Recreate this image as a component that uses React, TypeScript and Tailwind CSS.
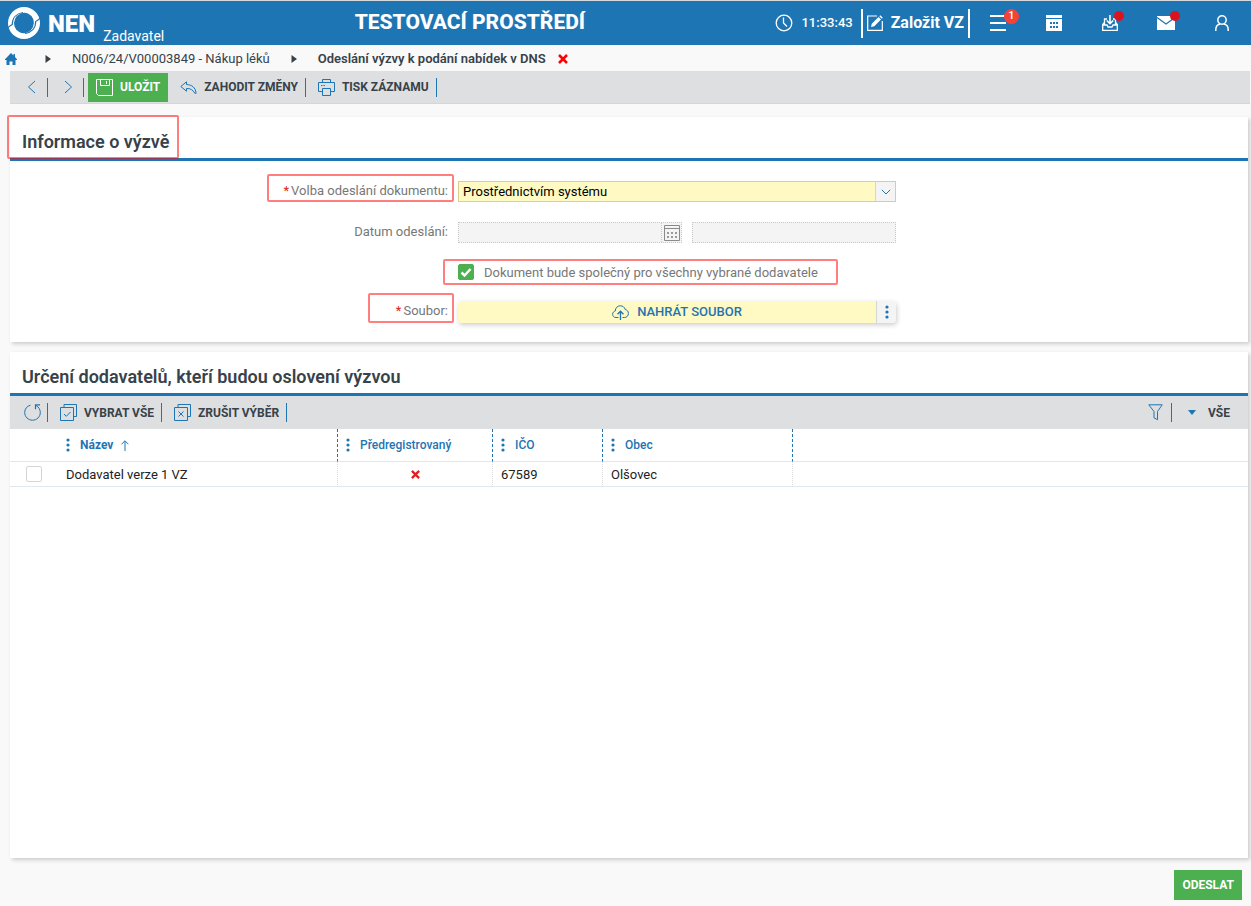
import React from "react";

interface IconProps {
  className?: string;
}

interface ChildrenProps {
  children: React.ReactNode;
}

const Logo = () => (
  <svg viewBox="0 0 32 32" className="h-8 w-8">
    <circle cx="16" cy="16" r="16" className="fill-white" />
    <ellipse cx="16" cy="16" rx="9.800" ry="10.300" className="fill-[#1e75b3]" transform="rotate(25 16 16)" />
    <path
      d="M-.5 21.500C1.500 18.500 3 18.500 4.300 17.500 4.300 11 8.500 6.500 15 5.500M32.500 10.500C30.500 13.500 29 13.500 27.700 14.500 27.700 21 23.500 25.500 17 26.500"
      className="fill-none stroke-[#1e75b3]"
      strokeWidth="1.200"
    />
  </svg>
);

const ClockIcon = () => (
  <svg viewBox="0 0 18 18" className="h-[18px] w-[18px] fill-none stroke-white">
    <circle cx="9" cy="9" r="7.800" strokeWidth="1.300" />
    <path d="M8.500 3.500V9l3.500 3.500" strokeWidth="1.300" />
  </svg>
);

const EditIcon = () => (
  <svg viewBox="0 0 16 16" className="h-4 w-4">
    <path d="M10 1H.7v14.300h14.600V6" className="fill-none stroke-white" strokeWidth="1.200" />
    <path d="M4 12l.8-3.300L11.500 2l2.500 2.500-6.700 6.700zM12.300 1.200l1-1L15.800 2.700l-1 1z" className="fill-white" />
  </svg>
);

const MenuIcon = () => (
  <svg viewBox="0 0 16 16" className="h-4 w-4 fill-white">
    <path d="M0 0h16v2H0zM0 7h16v2H0zM0 14h16v2H0z" />
  </svg>
);

const CalendarIcon = () => (
  <svg viewBox="0 0 16 16" className="h-4 w-4">
    <path d="M0 0h16v3H0zM0 4h16v12H0z" className="fill-white" />
    <path d="M4 7h2v2H4zM7 7h2v2H7zM10 7h2v2h-2zM4 11h2v2H4zM7 11h2v2H7zM10 11h2v2h-2z" className="fill-[#1e75b3]" />
  </svg>
);

const InboxIcon = () => (
  <svg viewBox="0 0 16 16" className="h-4 w-4 fill-none stroke-white" strokeWidth="1.300">
    <path d="M5 4H2.500v3.500L.7 9.500v5.800h14.600V9.500l-1.800-2V4H11" />
    <path d="M.7 10H5l1 2h4l1-2h4.300M2.500 7.500V10M13.500 7.500V10" />
    <path d="M8 0v8.500M4.800 5.500L8 8.700l3.200-3.200" strokeWidth="1.600" />
  </svg>
);

const MailIcon = () => (
  <svg viewBox="0 0 18 14" className="h-3.5 w-[18px]">
    <path d="M0 0h18v14H0z" className="fill-white" />
    <path d="M0 1.500l9 6.500 9-6.500" className="fill-none stroke-[#1e75b3]" strokeWidth="1.200" />
  </svg>
);

const UserIcon = () => (
  <svg viewBox="0 0 14 16" className="h-4 w-3.5 fill-none stroke-white" strokeWidth="1.500">
    <circle cx="7" cy="5" r="4.200" />
    <path d="M.8 16v-1.500c0-3 2-5 4.500-5.500M13.200 16v-1.500c0-3-2-5-4.500-5.500" />
  </svg>
);

const HomeIcon = () => (
  <svg viewBox="0 0 12 12" className="h-3 w-3 fill-[#1e75b3]">
    <path d="M6 0l2.500 2.500V1H10v3l2 2.200V7h-1.500v5H7.500V8.500h-3V12h-3V7H0v-.8z" />
  </svg>
);

const BackIcon = () => (
  <svg viewBox="0 0 9 14" className="h-3.5 w-[9px] fill-none stroke-[#1e75b3]">
    <path d="M8 1L1.500 7 8 13" />
  </svg>
);

const ForwardIcon = () => (
  <svg viewBox="0 0 9 14" className="h-3.5 w-[9px] fill-none stroke-[#1e75b3]">
    <path d="M1 1l6.500 6L1 13" />
  </svg>
);

const SaveIcon = () => (
  <svg viewBox="0 0 17 17" className="h-[17px] w-[17px] fill-none stroke-white">
    <path d="M.5.5h16v16H2.500l-2-2zM4.500.5v6h9v-6M10.500 2v3" />
  </svg>
);

const UndoIcon = () => (
  <svg viewBox="0 0 17 13" className="h-[13px] w-[17px] fill-none stroke-[#1e75b3]">
    <path d="M6.500.8L.8 5.500l5.700 4.700V7.500c4-.3 6.500 1.500 8.500 5 0 0 1.800 0 1-.5C15.500 6.500 12 3.800 6.500 3.500z" />
  </svg>
);

const PrintIcon = () => (
  <svg viewBox="0 0 17 17" className="h-[17px] w-[17px] fill-none stroke-[#1e75b3]">
    <path d="M4.500 3.500v-3h8v3M4.500 12.500h-4v-9h16v9h-4M4.500 9.500h8v7h-8zM3 6.500h1.500M5.500 6.500H7" />
  </svg>
);

const DateIcon = () => (
  <svg viewBox="0 0 16 16" className="h-4 w-4">
    <path d="M.5.5h15v15H.5zM.5 3.500h15" className="fill-none stroke-[#8a8a8a]" />
    <path d="M3 7h2v2H3zM7 7h2v2H7zM11 7h2v2h-2zM3 11h2v2H3zM7 11h2v2H7zM11 11h2v2h-2z" className="fill-[#9a9a9a]" />
  </svg>
);

const ChevronIcon = () => (
  <svg viewBox="0 0 10 6" className="h-1.5 w-2.5 fill-none stroke-[#1e75b3]">
    <path d="M.8.8L5 5 9.200.8" />
  </svg>
);

const CloudIcon = () => (
  <svg viewBox="0 0 17 15" className="h-[15px] w-[17px] fill-none stroke-[#1e75b3]">
    <path d="M6.500 12.500H4C1.800 12.500.6 11 .6 9.200.6 7.600 1.700 6.300 3.300 6 3.200 3 5.500.8 8.300.8c2.400 0 4.300 1.400 4.900 3.700 1.900.3 3.200 1.900 3.200 3.900 0 2.300-1.600 4.100-3.900 4.100H10.500" />
    <path d="M8.500 15V6.500M5.500 9.200l3-3 3 3" strokeWidth="1.300" />
  </svg>
);

const DotsIcon = () => (
  <svg viewBox="0 0 4 14" className="h-3.5 w-1 fill-[#1e75b3]">
    <circle cx="2" cy="2" r="1.600" />
    <circle cx="2" cy="7" r="1.600" />
    <circle cx="2" cy="12" r="1.600" />
  </svg>
);

const RefreshIcon = () => (
  <svg viewBox="0 0 17 17" className="h-[17px] w-[17px] fill-none stroke-[#1e75b3]">
    <path d="M6.500 1.200C3 2 .7 4.800.7 8.500c0 4.300 3.500 7.700 7.800 7.700s7.800-3.400 7.800-7.700c0-3-1.700-5.700-4.300-7" />
    <path d="M16 .8h-4.500v4.500" strokeWidth="1.200" />
  </svg>
);

const SelectAllIcon = () => (
  <svg viewBox="0 0 17 17" className="h-[17px] w-[17px] fill-none stroke-[#1e75b3]">
    <path d="M.5 3.500h13v13H.5zM4 3V.5h12.500v12H14" />
    <path d="M4 10l2.300 2.300L10.500 8" />
  </svg>
);

const ClearIcon = () => (
  <svg viewBox="0 0 17 17" className="h-[17px] w-[17px] fill-none stroke-[#1e75b3]">
    <path d="M.5 3.500h13v13H.5zM4 3V.5h12.500v12H14" />
    <path d="M4.500 7.500l5 5M9.500 7.500l-5 5" />
  </svg>
);

const FilterIcon = () => (
  <svg viewBox="0 0 15 17" className="h-[17px] w-[15px] fill-none stroke-[#1e75b3]">
    <path d="M.8.8h13.400L9.500 7.500v8.200L6 13.800V7.500z" />
  </svg>
);

const ArrowUpIcon = () => (
  <svg viewBox="0 0 8 11" className="h-[11px] w-2 fill-none stroke-[#1e75b3]">
    <path d="M4 11V1M.6 4.200L4 .8l3.400 3.400" />
  </svg>
);

const CrossIcon = ({ className }: IconProps) => (
  <svg viewBox="0 0 10 10" className={className} strokeWidth="2.500">
    <path d="M1 1l8 8M9 1l-8 8" />
  </svg>
);

const CrumbArrow = () => (
  <svg viewBox="0 0 6 8" className="h-2 w-1.5 fill-[#37424a]">
    <path d="M.5 0L6 4 .5 8z" />
  </svg>
);

const Divider = () => <div className="h-[19px] w-px bg-[#1e75b3]" />;

const SectionTitle = ({ children }: ChildrenProps) => (
  <div className="flex h-11 items-center border-b-[3px] border-[#1e75b3] pt-2 pl-3">
    <h2 className="text-lg font-semibold text-[#37424a]">{children}</h2>
  </div>
);

const Required = () => <span className="mr-0.5 text-[#e02020]">*</span>;

const mark = "pointer-events-none absolute rounded-xs border-2 border-[#ff0000]/50";
const headCell = "border-l border-dashed border-[#1e75b3] p-0 text-left font-medium";
const bodyCell = "border-l border-dotted border-[#dcdcdc] p-0 pt-px pl-2";

const Header = () => (
  <header className="flex h-[45px] items-center border-t border-[#d5d9dc] bg-[#1e75b3] pr-px text-white">
    <div className="flex items-center self-stretch pl-2">
      <Logo />
      <span className="ml-2 pt-0.5 text-2xl font-black">NEN</span>
      <span className="ml-2 self-end pb-px text-sm leading-4">Zadavatel</span>
    </div>

    <h1 className="flex-1 text-center text-[21px] font-extrabold">
      TESTOVACÍ PROSTŘEDÍ
    </h1>

    <ClockIcon />
    <time className="mr-2 ml-2 text-[13px] font-medium">11:33:43</time>
    <button className="flex h-[29px] items-center border-x-2 border-white px-1 text-base font-bold">
      <EditIcon />
      <span className="ml-2">Založit VZ</span>
    </button>

    <nav className="flex">
      <button aria-label="Menu" className="relative flex w-14 justify-center">
        <MenuIcon />
        <span className="absolute -top-1.5 left-8 ml-0.5 flex h-[15px] w-[15px] items-center justify-center rounded-full bg-[#f44336] text-[11px] font-medium">
          1
        </span>
      </button>
      <button aria-label="Kalendář" className="flex w-14 justify-center">
        <CalendarIcon />
      </button>
      <button aria-label="Doručené" className="relative flex w-14 justify-center">
        <InboxIcon />
        <span className="absolute -top-1 left-8 h-2.5 w-2.5 rounded-full bg-[#d9141e]" />
      </button>
      <button aria-label="Zprávy" className="relative flex w-14 items-center justify-center">
        <MailIcon />
        <span className="absolute -top-1 left-8 h-2.5 w-2.5 rounded-full bg-[#d9141e]" />
      </button>
      <button aria-label="Uživatel" className="flex w-14 justify-center">
        <UserIcon />
      </button>
    </nav>
  </header>
);

const Breadcrumbs = () => (
  <nav className="flex h-[26px] items-center pt-px pl-[5px] text-[13px] text-[#37424a]">
    <a href="#" aria-label="Domů" className="mr-7">
      <HomeIcon />
    </a>
    <CrumbArrow />
    <a href="#" className="mx-[21px]">
      N006/24/V00003849 - Nákup léků
    </a>
    <CrumbArrow />
    <span className="mr-3 ml-[21px] font-semibold">
      Odeslání výzvy k podání nabídek v DNS
    </span>
    <button aria-label="Zavřít">
      <CrossIcon className="h-2.5 w-2.5 stroke-[#ff0000]" />
    </button>
  </nav>
);

const Toolbar = () => (
  <div className="mr-px ml-2.5 flex h-[33px] items-center border-b border-[#d6d6d6] bg-[#dedfe0] text-xs font-bold text-[#37424a]">
    <button aria-label="Předchozí" className="pr-[11px] pl-[17px]">
      <BackIcon />
    </button>
    <Divider />
    <button aria-label="Další" className="pr-2.5 pl-4">
      <ForwardIcon />
    </button>
    <Divider />
    <button className="ml-1 flex h-[29px] items-center gap-[7px] bg-[#4caf50] px-2 text-white">
      <SaveIcon />
      ULOŽIT
    </button>
    <button className="flex items-center gap-[7px] pr-[7px] pl-3">
      <UndoIcon />
      ZAHODIT ZMĚNY
    </button>
    <Divider />
    <button className="flex items-center gap-[7px] pr-[7px] pl-3">
      <PrintIcon />
      TISK ZÁZNAMU
    </button>
    <Divider />
  </div>
);

const CallForm = () => (
  <section className="mt-[13px] mr-[3px] ml-2.5 bg-white shadow-[2px_2px_4px_rgba(0,0,0,0.18)]">
    <div className="relative">
      <SectionTitle>Informace o výzvě</SectionTitle>
      <span className={`${mark} -top-0.5 -left-[3px] h-11 w-[172px]`} />
    </div>

    <form className="grid grid-cols-[438fr_438fr_342fr] gap-x-2.5 gap-y-5 pt-5 pb-[19px] text-[13px] text-[#777]">
      <label htmlFor="delivery" className="relative justify-self-end leading-5">
        <Required />
        Volba odeslání dokumentu:
        <span className={`${mark} -top-[7px] -right-1.5 bottom-0 -left-4`} />
      </label>
      <div className="relative h-[21px]">
        <select
          id="delivery"
          className="block h-full w-full appearance-none border border-[#d9d08f] bg-[#fff9c4] px-1 text-black"
        >
          <option>Prostřednictvím systému</option>
        </select>
        <span className="pointer-events-none absolute inset-y-px right-px flex w-5 items-center justify-center border-l border-[#d5d5d5] bg-[#f4f4f4]">
          <ChevronIcon />
        </span>
      </div>
      <div />

      <label htmlFor="date" className="justify-self-end leading-5">
        Datum odeslání:
      </label>
      <div className="flex h-[21px] gap-2.5">
        <div className="flex flex-1 border border-dotted border-[#c8c8c8] bg-[#f4f4f4]">
          <input id="date" disabled className="min-w-0 flex-1" />
          <button type="button" disabled aria-label="Vybrat datum" className="flex w-5 items-center justify-center border-l border-dotted border-[#c8c8c8]">
            <DateIcon />
          </button>
        </div>
        <input
          aria-label="Čas odeslání"
          disabled
          className="w-[204px] border border-dotted border-[#c8c8c8] bg-[#f4f4f4]"
        />
      </div>
      <div />

      <div className="relative col-start-2 flex h-[18px] items-center justify-self-start">
        <input
          id="shared"
          type="checkbox"
          defaultChecked
          className="peer h-4 w-4 appearance-none rounded-xs border border-[#d5d5d5] checked:border-[#4caf50] checked:bg-[#4caf50]"
        />
        <svg viewBox="0 0 16 16" className="pointer-events-none absolute left-0 hidden h-4 w-4 fill-none stroke-white peer-checked:block">
          <path d="M3.500 8.500l3 3 6-6.500" strokeWidth="2.500" />
        </svg>
        <label htmlFor="shared" className="ml-2.5 pt-px">
          Dokument bude společný pro všechny vybrané dodavatele
        </label>
        <span className={`${mark} -inset-y-1 -right-5 -left-[15px]`} />
      </div>

      <label htmlFor="upload" className="relative col-start-1 justify-self-end leading-5">
        <Required />
        Soubor:
        <span className={`${mark} -top-2 -right-1.5 bottom-0 w-[86px]`} />
      </label>
      <div className="flex h-[22px] rounded-sm shadow-[1px_2px_5px_rgba(0,0,0,0.2)]">
        <button
          id="upload"
          type="button"
          className="flex flex-1 items-center justify-center gap-2 rounded-l-sm bg-[#fff9c4] pl-5 font-medium text-[#1e75b3]"
        >
          <CloudIcon />
          NAHRÁT SOUBOR
        </button>
        <button type="button" aria-label="Další možnosti" className="flex w-5 items-center justify-center rounded-r-sm border-l border-[#d5d5d5] bg-[#f4f4f4]">
          <DotsIcon />
        </button>
      </div>
    </form>
  </section>
);

const columns = ["Předregistrovaný", "IČO", "Obec"];

const Suppliers = () => (
  <section className="mt-2.5 mr-[3px] ml-2.5 flex-1 bg-white shadow-[2px_2px_4px_rgba(0,0,0,0.18)]">
    <SectionTitle>Určení dodavatelů, kteří budou oslovení výzvou</SectionTitle>

    <div className="flex h-[33px] items-center bg-[#dedfe0] text-xs font-bold text-[#37424a]">
      <button aria-label="Obnovit" className="pr-1.5 pl-3.5">
        <RefreshIcon />
      </button>
      <Divider />
      <button className="flex items-center gap-[7px] pr-[7px] pl-3">
        <SelectAllIcon />
        VYBRAT VŠE
      </button>
      <Divider />
      <button className="flex items-center gap-[7px] pr-[7px] pl-3">
        <ClearIcon />
        ZRUŠIT VÝBĚR
      </button>
      <Divider />
      <button aria-label="Filtr" className="mr-2 ml-auto">
        <FilterIcon />
      </button>
      <Divider />
      <button className="flex items-center gap-3 pr-[18px] pl-4">
        <svg viewBox="0 0 8 5" className="h-[5px] w-2 fill-[#1e75b3]">
          <path d="M0 0h8L4 5z" />
        </svg>
        VŠE
      </button>
    </div>

    <table className="w-full table-fixed border-separate border-spacing-0 text-[13px] text-[#222]">
      <colgroup>
        <col className="w-12" />
        <col className="w-[279px]" />
        <col className="w-[155px]" />
        <col className="w-[110px]" />
        <col className="w-[190px]" />
        <col />
      </colgroup>
      <thead>
        <tr className="h-[33px] text-xs text-[#1e75b3] *:border-b *:border-b-[#dfe8ec] *:[border-bottom-style:solid]">
          <th />
          <th className="p-0 text-left font-bold">
            <div className="flex items-center gap-2 pl-2">
              <DotsIcon />
              <span className="ml-0.5">Název</span>
              <ArrowUpIcon />
            </div>
          </th>
          {columns.map((name) => (
            <th key={name} className={headCell}>
              <div className="flex items-center gap-2 pl-2">
                <DotsIcon />
                <span className="ml-0.5">{name}</span>
              </div>
            </th>
          ))}
          <th className={headCell} />
        </tr>
      </thead>
      <tbody>
        <tr className="h-[25px] *:border-b *:border-b-[#dfe8ec] *:[border-bottom-style:solid]">
          <td className="p-0">
            <input
              type="checkbox"
              aria-label="Vybrat řádek"
              className="mx-auto block h-4 w-4 appearance-none rounded-xs border border-[#d5d5d5]"
            />
          </td>
          <td className="p-0 pt-px pl-2">Dodavatel verze 1 VZ</td>
          <td className="border-l border-dotted border-[#dcdcdc] p-0">
            <CrossIcon className="mx-auto h-[9px] w-[9px] stroke-[#e02020]" />
          </td>
          <td className={bodyCell}>67589</td>
          <td className={bodyCell}>Olšovec</td>
          <td className={bodyCell} />
        </tr>
      </tbody>
    </table>
  </section>
);

const App = () => {
  return (
    <div className="flex min-h-screen flex-col bg-[#f9f9f9] font-['Roboto',sans-serif]">
      <Header />
      <Breadcrumbs />
      <Toolbar />
      <CallForm />
      <Suppliers />
      <footer className="flex justify-end pt-3 pr-[9px] pb-1.5">
        <button className="h-[30px] bg-[#4caf50] px-2 text-xs font-bold text-white">
          ODESLAT
        </button>
      </footer>
    </div>
  );
};

export default App;
